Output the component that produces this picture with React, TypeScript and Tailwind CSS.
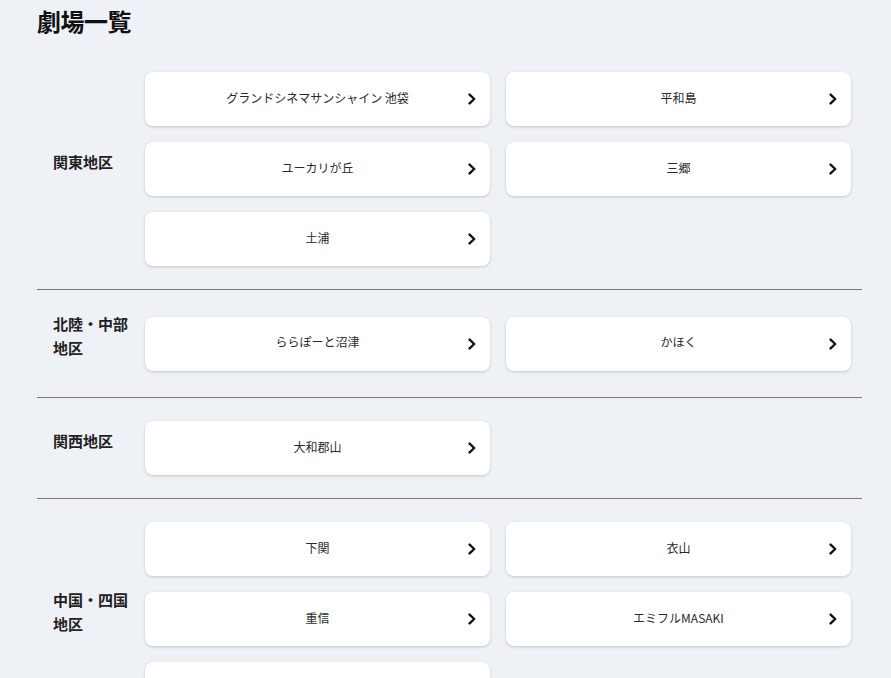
import React from "react";

type Region = { name: string; theaters: string[] };

const regions: Region[] = [
  { name: "関東地区", theaters: ["グランドシネマサンシャイン 池袋", "平和島", "ユーカリが丘", "三郷", "土浦"] },
  { name: "北陸・中部地区", theaters: ["ららぽーと沼津", "かほく"] },
  { name: "関西地区", theaters: ["大和郡山"] },
  { name: "中国・四国地区", theaters: ["下関", "衣山", "重信", "エミフルMASAKI", "大街道"] },
];

function Chevron() {
  return (
    <svg width="10" height="12" viewBox="0 0 10 12" className="absolute right-[13px] top-1/2 -translate-y-1/2">
      <path d="M2.6 1.6 L7.2 6 L2.6 10.4" fill="none" stroke="#111" strokeWidth="2.4" strokeLinecap="round" strokeLinejoin="round" />
    </svg>
  );
}

function Card({ name }: { name: string }) {
  return (
    <div className="relative flex h-[54px] items-center justify-center rounded-lg bg-white shadow-[0_1px_3px_rgba(0,0,0,0.18)]">
      <span className="pb-[3px] text-[12px] leading-none text-[#2a2a2a]">{name}</span>
      <Chevron />
    </div>
  );
}

export default function App() {
  return (
    <div
      className="min-h-screen bg-[#eef1f5] pl-[37px] pr-[29px] pt-[5px]"
      style={{ fontFamily: '"Noto Sans CJK JP", "Noto Sans", sans-serif' }}
    >
      <h1 className="mb-[12px] text-[24px] font-bold leading-8 tracking-[-0.5px] text-[#111]">劇場一覧</h1>
      {regions.map((r) => (
        <section key={r.name} className="flex items-center border-b border-[#777] py-[22px]">
          <div className="w-[108px] shrink-0 pl-4 pr-[13px]">
            <h2 className="pb-[15px] text-[15px] font-bold leading-6 text-[#222]">{r.name}</h2>
          </div>
          <div className="grid flex-1 grid-cols-2 gap-4 py-px pr-[11px]">
            {r.theaters.map((t) => (
              <Card key={t} name={t} />
            ))}
          </div>
        </section>
      ))}
    </div>
  );
}
